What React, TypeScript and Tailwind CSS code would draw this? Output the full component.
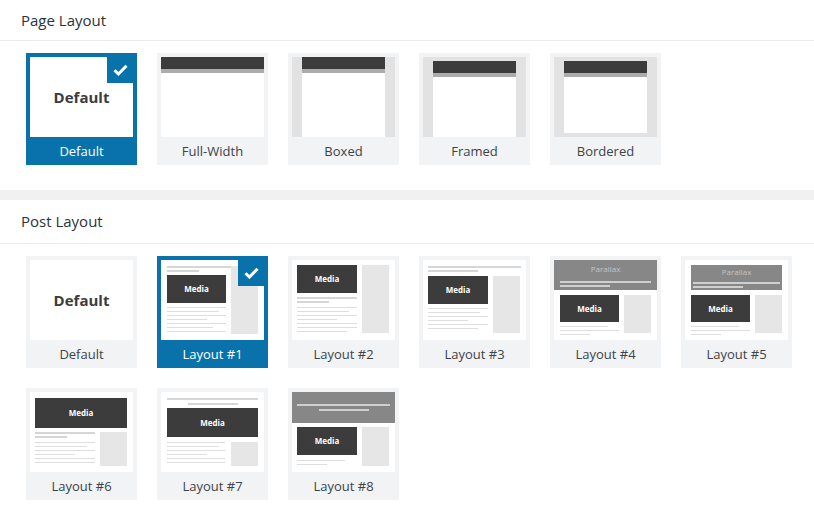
import type { ReactNode } from 'react';

const font = { fontFamily: '"Open Sans", "Noto Sans", sans-serif' };

function CheckBadge() {
  return (
    <div className="absolute right-0 top-0 flex h-[26px] w-[26px] items-center justify-center bg-[#0a72aa]">
      <svg width="15" height="12" viewBox="0 0 15 12">
        <path d="M1.5 6.2 L5.4 10 L13.5 1.8" fill="none" stroke="#fff" strokeWidth="3" strokeLinejoin="miter" />
      </svg>
    </div>
  );
}

function Card({ label, selected, children }: { label: string; selected?: boolean; children: ReactNode }) {
  return (
    <div className={`flex w-[111px] flex-col px-[4px] pt-[4px] ${selected ? 'bg-[#0a72aa]' : 'bg-[#f2f3f4]'}`}>
      <div className="relative h-[80px] w-[103px] overflow-hidden bg-white">
        {children}
        {selected ? <CheckBadge /> : null}
      </div>
      <div className={`flex h-[28px] items-center justify-center pt-[2px] text-[13px] ${selected ? 'text-white' : 'text-[#3c434a]'}`}>
        {label}
      </div>
    </div>
  );
}

function TopBar() {
  return (
    <div className="flex flex-col">
      <div className="h-[12px] bg-[#3c3c3c]" />
      <div className="h-[4px] bg-[#acacac]" />
    </div>
  );
}

function DefaultThumb() {
  return (
    <div className="flex h-full items-center justify-center text-[15px] font-bold text-[#3c3c3c]">Default</div>
  );
}

function Media({ w, h }: { w: string; h: string }) {
  return (
    <div className={`flex shrink-0 items-center justify-center bg-[#3c3c3c] text-[8px] font-bold text-white ${w} ${h}`}>
      Media
    </div>
  );
}

function Bold({ w }: { w: string }) {
  return <div className={`h-[2px] bg-[#d6d6d6] ${w}`} />;
}

function Thin({ widths }: { widths: string[] }) {
  return (
    <div className="flex flex-col gap-[3px]">
      {widths.map((w, i) => (
        <div key={i} className={`h-[1px] bg-[#dedede] ${w}`} />
      ))}
    </div>
  );
}

function Side({ h }: { h: string }) {
  return <div className={`w-[27px] shrink-0 bg-[#e6e6e6] ${h}`} />;
}

function Post1() {
  return (
    <div className="flex h-full gap-[5px] pl-[6px] pr-[5px] pt-[6px]">
      <div className="flex w-[59px] flex-col">
        <div className="flex flex-col gap-[2px]">
          <Bold w="w-[68px]" />
          <Bold w="w-[32px]" />
        </div>
        <div className="mt-[3px]">
          <Media w="w-[59px]" h="h-[28px]" />
        </div>
        <div className="mt-[4px]">
          <Thin widths={['w-full', 'w-[52px]', 'w-full', 'w-[40px]', 'w-full', 'w-[46px]', 'w-full']} />
        </div>
      </div>
      <Side h="h-[68px]" />
    </div>
  );
}

function Post2() {
  return (
    <div className="flex h-full gap-[5px] pl-[5px] pr-[6px] pt-[5px]">
      <div className="flex w-[60px] flex-col">
        <Media w="w-[60px]" h="h-[28px]" />
        <div className="mt-[4px] flex flex-col gap-[2px]">
          <Bold w="w-full" />
          <Bold w="w-[32px]" />
        </div>
        <div className="mt-[4px]">
          <Thin widths={['w-full', 'w-[52px]', 'w-full', 'w-[40px]', 'w-full', 'w-full', 'w-[50px]']} />
        </div>
      </div>
      <Side h="h-[68px]" />
    </div>
  );
}

function Post3() {
  return (
    <div className="flex h-full flex-col px-[5px] pt-[6px]">
      <div className="flex flex-col gap-[2px]">
        <Bold w="w-full" />
        <Bold w="w-[50px]" />
      </div>
      <div className="mt-[4px] flex gap-[5px]">
        <div className="flex w-[60px] flex-col">
          <Media w="w-[60px]" h="h-[28px]" />
          <div className="mt-[4px]">
            <Thin widths={['w-full', 'w-[52px]', 'w-full', 'w-[40px]', 'w-full', 'w-[50px]']} />
          </div>
        </div>
        <Side h="h-[57px]" />
      </div>
    </div>
  );
}

function Post4() {
  return (
    <div className="flex h-full flex-col">
      <div className="flex h-[30px] flex-col items-center bg-[#878787] px-[6px] pt-[3px]">
        <div className="text-[8px] leading-[12px] text-[#c4c4c4]">Parallax</div>
        <div className="mt-[6px] flex w-full flex-col gap-[2px]">
          <div className="h-[2px] w-full bg-[#cfcfcf]" />
          <div className="h-[2px] w-[50px] bg-[#cfcfcf]" />
        </div>
      </div>
      <div className="mt-[5px] flex gap-[5px] px-[6px]">
        <div className="flex w-[59px] flex-col">
          <Media w="w-[59px]" h="h-[27px]" />
          <div className="mt-[4px]">
            <Thin widths={['w-[48px]', 'w-full', 'w-[30px]']} />
          </div>
        </div>
        <Side h="h-[38px]" />
      </div>
    </div>
  );
}

function Post5() {
  return (
    <div className="flex h-full flex-col pt-[5px]">
      <div className="mx-[6px] flex h-[25px] flex-col items-center bg-[#878787] px-[2px] pt-[1px]">
        <div className="text-[8px] leading-[12px] text-[#c4c4c4]">Parallax</div>
        <div className="mt-[4px] flex w-full flex-col gap-[2px]">
          <div className="h-[2px] w-full bg-[#cfcfcf]" />
          <div className="h-[2px] w-[50px] bg-[#cfcfcf]" />
        </div>
      </div>
      <div className="mt-[5px] flex gap-[5px] px-[6px]">
        <div className="flex w-[59px] flex-col">
          <Media w="w-[59px]" h="h-[27px]" />
          <div className="mt-[4px]">
            <Thin widths={['w-[48px]', 'w-full', 'w-[30px]']} />
          </div>
        </div>
        <Side h="h-[38px]" />
      </div>
    </div>
  );
}

function Post6() {
  return (
    <div className="flex h-full flex-col pl-[5px] pr-[6px] pt-[6px]">
      <Media w="w-full" h="h-[30px]" />
      <div className="mt-[4px] flex gap-[5px]">
        <div className="flex w-[60px] flex-col">
          <div className="flex flex-col gap-[2px]">
            <Bold w="w-full" />
            <Bold w="w-[32px]" />
          </div>
          <div className="mt-[4px]">
            <Thin widths={['w-full', 'w-[52px]', 'w-full', 'w-[40px]', 'w-full', 'w-full']} />
          </div>
        </div>
        <Side h="h-[34px]" />
      </div>
    </div>
  );
}

function Post7() {
  return (
    <div className="flex h-full flex-col px-[6px] pt-[6px]">
      <div className="flex flex-col items-center gap-[3px]">
        <Bold w="w-full" />
        <Bold w="w-[50px]" />
      </div>
      <div className="mt-[3px]">
        <Media w="w-full" h="h-[29px]" />
      </div>
      <div className="mt-[5px] flex gap-[6px]">
        <div className="flex w-[58px] flex-col">
          <Thin widths={['w-full', 'w-[52px]', 'w-full', 'w-[40px]', 'w-full', 'w-full']} />
        </div>
        <Side h="h-[24px]" />
      </div>
    </div>
  );
}

function Post8() {
  return (
    <div className="flex h-full flex-col">
      <div className="flex h-[31px] flex-col items-center justify-center gap-[3px] bg-[#878787] px-[5px]">
        <div className="h-[2px] w-full bg-[#cfcfcf]" />
        <div className="h-[2px] w-[50px] bg-[#cfcfcf]" />
      </div>
      <div className="mt-[4px] flex gap-[5px] pl-[5px] pr-[6px]">
        <div className="flex w-[60px] flex-col">
          <Media w="w-[60px]" h="h-[28px]" />
          <div className="mt-[5px]">
            <Thin widths={['w-[48px]', 'w-[30px]']} />
          </div>
        </div>
        <Side h="h-[39px]" />
      </div>
    </div>
  );
}

function Section({ title, headerH, children }: { title: string; headerH: string; children: ReactNode }) {
  return (
    <section className="bg-white">
      <div className={`flex items-center border-b border-[#ececec] pl-[21px] text-[15px] text-[#2c3338] ${headerH}`}>
        {title}
      </div>
      {children}
    </section>
  );
}

export default function App() {
  return (
    <div className="min-h-[522px] w-[814px] bg-[#f1f1f1]" style={font}>
      <Section title="Page Layout" headerH="h-[41px]">
        <div className="flex gap-[20px] pb-[25px] pl-[26px] pt-[12px]">
          <Card label="Default" selected>
            <DefaultThumb />
          </Card>
          <Card label="Full-Width">
            <TopBar />
          </Card>
          <Card label="Boxed">
            <div className="flex h-full bg-[#e2e2e2] px-[10px]">
              <div className="h-full w-full bg-white">
                <TopBar />
              </div>
            </div>
          </Card>
          <Card label="Framed">
            <div className="flex h-full bg-[#e2e2e2] px-[10px] pt-[4px]">
              <div className="h-full w-full bg-white">
                <TopBar />
              </div>
            </div>
          </Card>
          <Card label="Bordered">
            <div className="flex h-full bg-[#e2e2e2] px-[10px] py-[4px]">
              <div className="h-full w-full bg-white">
                <TopBar />
              </div>
            </div>
          </Card>
        </div>
      </Section>
      <div className="h-[10px]" />
      <Section title="Post Layout" headerH="h-[44px]">
        <div className="flex flex-col gap-[20px] pb-[22px] pl-[26px] pt-[12px]">
          <div className="flex gap-[20px]">
            <Card label="Default">
              <DefaultThumb />
            </Card>
            <Card label="Layout #1" selected>
              <Post1 />
            </Card>
            <Card label="Layout #2">
              <Post2 />
            </Card>
            <Card label="Layout #3">
              <Post3 />
            </Card>
            <Card label="Layout #4">
              <Post4 />
            </Card>
            <Card label="Layout #5">
              <Post5 />
            </Card>
          </div>
          <div className="flex gap-[20px]">
            <Card label="Layout #6">
              <Post6 />
            </Card>
            <Card label="Layout #7">
              <Post7 />
            </Card>
            <Card label="Layout #8">
              <Post8 />
            </Card>
          </div>
        </div>
      </Section>
    </div>
  );
}
